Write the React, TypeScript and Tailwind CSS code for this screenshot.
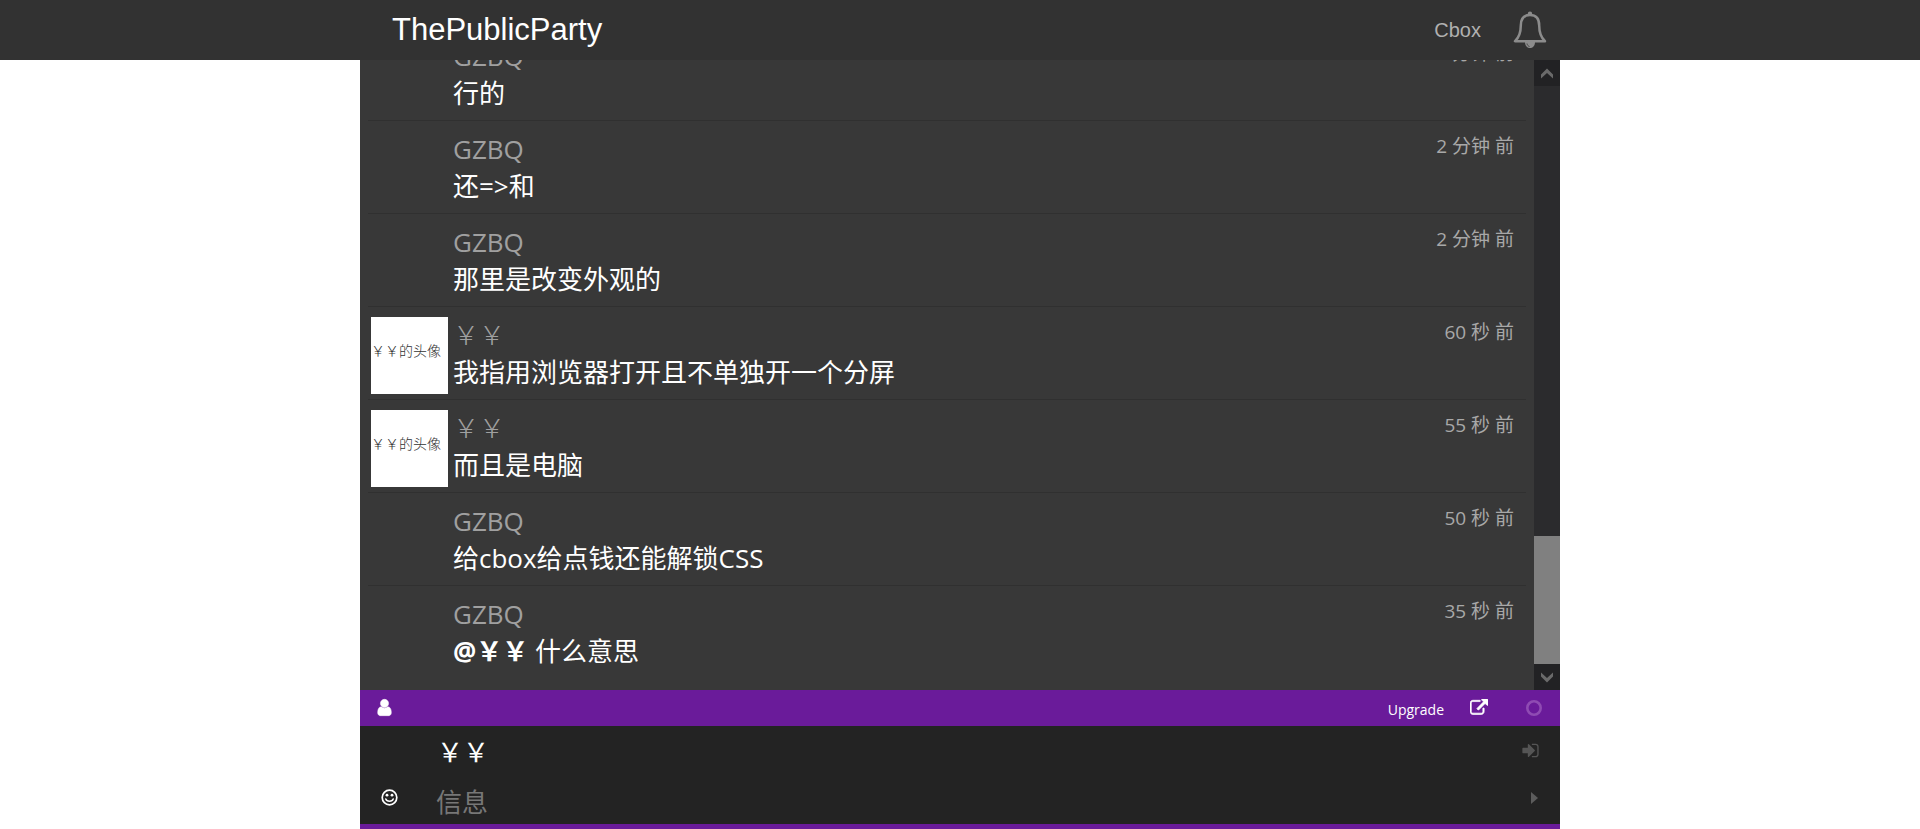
import React, { useState } from "react";

interface Message {
  id: number;
  name: string;
  text: string;
  time: string;
  mention?: string;
  avatar?: boolean;
}

const MESSAGES: Message[] = [
  { id: 1, name: "GZBQ", text: "行的", time: "4 分钟 前" },
  { id: 2, name: "GZBQ", text: "还=>和", time: "2 分钟 前" },
  { id: 3, name: "GZBQ", text: "那里是改变外观的", time: "2 分钟 前" },
  {
    id: 4,
    name: "￥￥",
    text: "我指用浏览器打开且不单独开一个分屏",
    time: "60 秒 前",
    avatar: true,
  },
  { id: 5, name: "￥￥", text: "而且是电脑", time: "55 秒 前", avatar: true },
  { id: 6, name: "GZBQ", text: "给cbox给点钱还能解锁CSS", time: "50 秒 前" },
  { id: 7, name: "GZBQ", mention: "@￥￥", text: "什么意思", time: "35 秒 前" },
];

const ICONS = {
  user: "M1536 1399q0 109-62.5 187t-150.5 78h-854q-88 0-150.5-78t-62.5-187q0-85 8.5-160.5t31.5-152 58.5-131 94-89 134.5-34.5q131 128 313 128t313-128q76 0 134.5 34.5t94 89 58.5 131 31.5 152 8.5 160.5zm-256-887q0 159-112.5 271.5t-271.5 112.5-271.5-112.5-112.5-271.5 112.5-271.5 271.5-112.5 271.5 112.5 112.5 271.5z",
  external:
    "M1408 928v320q0 119-84.5 203.5t-203.5 84.5h-832q-119 0-203.5-84.5t-84.5-203.5v-832q0-119 84.5-203.5t203.5-84.5h704q14 0 23 9t9 23v64q0 14-9 23t-23 9h-704q-66 0-113 47t-47 113v832q0 66 47 113t113 47h832q66 0 113-47t47-113v-320q0-14 9-23t23-9h64q14 0 23 9t9 23zm384-864v512q0 26-19 45t-45 19-45-19l-176-176-652 652q-10 10-23 10t-23-10l-114-114q-10-10-10-23t10-23l652-652-176-176q-19-19-19-45t19-45 45-19h512q26 0 45 19t19 45z",
  signIn:
    "M1312 896q0 26-19 45l-544 544q-19 19-45 19t-45-19-19-45v-288h-448q-26 0-45-19t-19-45v-384q0-26 19-45t45-19h448v-288q0-26 19-45t45-19 45 19l544 544q19 19 19 45zm352-352v704q0 119-84.5 203.5t-203.5 84.5h-320q-13 0-22.5-9.5t-9.5-22.5q0-4-1-20t-.5-26.5 3-23.5 10-19.5 20.5-6.5h320q66 0 113-47t47-113v-704q0-66-47-113t-113-47h-312l-11.5-1-11.5-3-8-5.5-7-9-2-13.5q0-4-1-20t-.5-26.5 3-23.5 10-19.5 20.5-6.5h320q119 0 203.5 84.5t84.5 203.5z",
};

const Icon: React.FC<{
  name: keyof typeof ICONS;
  size: number;
  stroke?: number;
}> = ({ name, size, stroke = 0 }) => (
  <svg
    width={size}
    height={size}
    viewBox="0 0 1792 1792"
    fill="currentColor"
    stroke="currentColor"
    strokeWidth={stroke}
  >
    <path d={ICONS[name]} />
  </svg>
);

const BellIcon = () => (
  <svg width="34" height="38" viewBox="0 0 34 38" fill="none" stroke="#8c8c8c">
    <path
      d="M17 4C10.5 4 7.8 8.5 7.8 14.5C7.8 22 6 26.5 2 30.2H32C28 26.5 26.2 22 26.2 14.5C26.2 8.5 23.5 4 17 4Z"
      strokeWidth="2.5"
      strokeLinejoin="round"
    />
    <circle cx="17" cy="2.8" r="2.2" fill="#8c8c8c" stroke="none" />
    <path d="M12 31C12 39 22 39 22 31Z" fill="#8c8c8c" stroke="none" />
    <path d="M14 32.5C14.3 34 15 35 16.5 35.5" stroke="#444" />
  </svg>
);

const SmileIcon = () => (
  <svg width="17" height="17" viewBox="0 0 17 17" fill="none" stroke="#fff">
    <circle cx="8.5" cy="8.5" r="7.3" strokeWidth="1.7" />
    <path
      d="M4.8 10C5.8 13 11.2 13 12.2 10"
      strokeWidth="1.5"
      strokeLinecap="round"
    />
    <circle cx="6" cy="6.2" r="1.4" fill="#fff" stroke="none" />
    <circle cx="11" cy="6.2" r="1.4" fill="#fff" stroke="none" />
  </svg>
);

const Header = () => (
  <header className="h-15 shrink-0 bg-[#323232]">
    <div className="mx-auto flex h-full max-w-[1200px] items-center justify-between pl-8 pr-[13px]">
      <a
        href="#"
        className="font-['Liberation_Sans',sans-serif] text-[31px] leading-10 text-white"
      >
        ThePublicParty
      </a>
      <nav className="flex items-center gap-8">
        <a
          href="#"
          className="font-['Liberation_Sans',sans-serif] text-xl text-[#b0b0b0]"
        >
          Cbox
        </a>
        <button type="button" aria-label="Notifications">
          <BellIcon />
        </button>
      </nav>
    </div>
  </header>
);

const MessageRow: React.FC<{ message: Message }> = ({ message }) => (
  <li className="flex shrink-0 border-t border-[#303030] py-2.5 pl-[3px] pr-3">
    <div className="-mb-2 mr-[5px] h-[77px] w-[77px] shrink-0">
      {message.avatar && (
        <div className="h-full overflow-hidden whitespace-nowrap bg-white pt-5 text-sm leading-7 font-light text-[#333]">
          ￥￥的头像
        </div>
      )}
    </div>
    <div className="min-w-0 flex-1">
      <div className="h-[37px] text-[26px] leading-9 font-light text-[#a0a0a0]">
        <span className={message.avatar ? "" : "font-normal"}>
          {message.name}
        </span>
      </div>
      <div className="h-[35px] text-[26px] leading-9 text-white">
        {message.mention && <b>{message.mention}</b>} {message.text}
      </div>
    </div>
    <time className="mt-0.5 h-6.5 text-[19px] leading-6.5 text-[#a8a8a8]">
      {message.time}
    </time>
  </li>
);

const Scrollbar = () => (
  <div className="flex w-6.5 shrink-0 flex-col bg-[#2b2b2d]">
    <button
      type="button"
      aria-label="Scroll up"
      className="flex h-6.5 items-center justify-center bg-[#222224]"
    >
      <svg width="12" height="11" viewBox="0 0 13 11" fill="#6a6a6a">
        <path d="M6.5 0L13 6.5V11L6.5 5L0 11V6.5Z" />
      </svg>
    </button>
    <div className="flex flex-1 flex-col justify-end">
      <div className="h-32 bg-[#808080]" />
    </div>
    <button
      type="button"
      aria-label="Scroll down"
      className="flex h-6.5 items-center justify-center bg-[#222224]"
    >
      <svg width="12" height="11" viewBox="0 0 13 11" fill="#6a6a6a">
        <path d="M6.5 11L13 4.5V0L6.5 6L0 0V4.5Z" />
      </svg>
    </button>
  </div>
);

const Toolbar = () => (
  <div className="flex h-9 shrink-0 items-center justify-between bg-[#6a1b9a] pl-[15px] pr-4.5 text-white">
    <button type="button" aria-label="Profile" className="pb-0.5">
      <Icon name="user" size={19} stroke={50} />
    </button>
    <div className="flex items-center">
      <a href="#" className="pt-1 text-sm">
        Upgrade
      </a>
      <button type="button" aria-label="Open in new window" className="ml-6.5">
        <Icon name="external" size={18} stroke={70} />
      </button>
      <button type="button" aria-label="Status" className="ml-9.5">
        <svg width="16" height="16" viewBox="0 0 16 16" fill="none">
          <circle cx="8" cy="8" r="6.7" stroke="#8f4bb3" strokeWidth="2.6" />
        </svg>
      </button>
    </div>
  </div>
);

const PostForm = () => {
  const [name, setName] = useState("￥￥");
  const [text, setText] = useState("");

  return (
    <form
      className="shrink-0 border-b-5 border-[#6a1b9a] bg-[#232323]"
      onSubmit={(e) => e.preventDefault()}
    >
      <div className="flex h-[49px] items-center pl-[77px] pr-5">
        <input
          aria-label="名称"
          className="min-w-0 flex-1 bg-transparent pt-0.5 text-[26px] leading-9 text-white outline-none"
          value={name}
          onChange={(e) => setName(e.target.value)}
        />
        <button type="button" aria-label="Sign in" className="text-[#555]">
          <Icon name="signIn" size={19} />
        </button>
      </div>
      <div className="flex h-[49px] items-center pl-[21px] pr-[22px]">
        <button type="button" aria-label="Emoji" className="pb-1">
          <SmileIcon />
        </button>
        <input
          aria-label="信息"
          placeholder="信息"
          className="ml-9.5 min-w-0 flex-1 bg-transparent pt-1 text-[26px] leading-9 text-white outline-none placeholder:text-[#777]"
          value={text}
          onChange={(e) => setText(e.target.value)}
        />
        <button type="submit" aria-label="Send" className="pb-1">
          <svg width="7" height="12" viewBox="0 0 7 12" fill="#5c5c5c">
            <path d="M0 0V12L7 6Z" />
          </svg>
        </button>
      </div>
    </form>
  );
};

export default function App() {
  return (
    <div className="flex h-screen flex-col bg-white font-['Open_Sans','Noto_Sans_CJK_SC',sans-serif]">
      <Header />
      <main className="mx-auto flex min-h-0 w-full max-w-[1200px] flex-1 flex-col">
        <div className="flex min-h-0 flex-1 bg-[#383838]">
          <ul className="flex min-w-0 flex-1 flex-col justify-end overflow-hidden px-2 pb-3">
            {MESSAGES.map((message) => (
              <MessageRow key={message.id} message={message} />
            ))}
          </ul>
          <Scrollbar />
        </div>
        <Toolbar />
        <PostForm />
      </main>
    </div>
  );
}
